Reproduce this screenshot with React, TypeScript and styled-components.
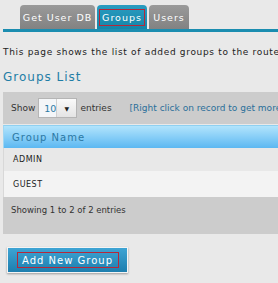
import styled, { createGlobalStyle } from 'styled-components'

const Global = createGlobalStyle`
  html, body {
    margin: 0;
    padding: 0;
    background: #e9e9e9;
    font-family: "DejaVu Sans", Verdana, sans-serif;
  }
`

const Page = styled.div`
  width: 278px;
  height: 283px;
  overflow: hidden;
  padding-left: 3px;
  box-sizing: border-box;
`

const TabBar = styled.div`
  display: flex;
  gap: 2px;
  padding: 5px 0 0 17px;
  height: 24px;
  border-bottom: 3px solid #1b8db0;
  width: 400px;
`

const Tab = styled.div<{ $width: number; $active?: boolean }>`
  width: ${({ $width }) => $width}px;
  height: 24px;
  box-sizing: border-box;
  border-radius: 4px 4px 0 0;
  display: flex;
  align-items: center;
  justify-content: center;
  font-size: 9.5px;
  letter-spacing: 1px;
  color: #fff;
  background: ${({ $active }) =>
    $active ? 'linear-gradient(#2a9cc0, #1585a8)' : 'linear-gradient(#9a9a9a, #828282)'};
`

const TabLabel = styled.span<{ $outlined?: boolean }>`
  padding: 2px 2px;
  border: 1px solid ${({ $outlined }) => ($outlined ? '#b5283a' : 'transparent')};
`

const Intro = styled.p`
  margin: 15px 0 0;
  font-size: 9px;
  letter-spacing: 0.68px;
  color: #222;
  white-space: nowrap;
`

const Title = styled.h2`
  margin: 13px 0 0;
  font-size: 12px;
  font-weight: normal;
  letter-spacing: 1px;
  color: #1f7ea6;
`

const Toolbar = styled.div`
  margin-top: 8px;
  height: 32px;
  background: #cccccc;
  display: flex;
  align-items: center;
  padding-left: 8px;
  font-size: 9px;
  color: #333;
  white-space: nowrap;
  gap: 3px;
`

const Select = styled.div`
  display: flex;
  width: 48px;
  height: 20px;
  border: 1px solid #b5b5b5;
  box-sizing: border-box;
  background: #f4f6f8;
`

const SelectValue = styled.span`
  flex: 1;
  display: flex;
  align-items: center;
  padding-left: 5px;
  color: #2a7aa5;
  font-size: 9.5px;
`

const SelectArrow = styled.span`
  width: 19px;
  display: flex;
  align-items: center;
  justify-content: center;
  background: linear-gradient(#fafafa, #e4e4e4);
  border-left: 1px solid #d0d0d0;
  font-size: 6px;
  color: #222;
`

const Hint = styled.span`
  margin-left: 15px;
  color: #2a6f9a;
`

const Table = styled.div`
  margin-top: 1px;
`

const HeaderRow = styled.div`
  height: 23px;
  display: flex;
  align-items: center;
  padding-left: 8px;
  background: linear-gradient(#b2e4fc, #5cb8f2);
  border-top: 1px solid #8fd0f0;
  border-left: 1px solid #9fd6f2;
  box-sizing: border-box;
  font-size: 10px;
  letter-spacing: 1px;
  color: #2b78a3;
`

const Row = styled.div<{ $alt?: boolean }>`
  height: ${({ $alt }) => ($alt ? '26px' : '23px')};
  display: flex;
  align-items: center;
  padding-left: 9px;
  font-size: 8px;
  letter-spacing: 0.5px;
  color: #222;
  background: ${({ $alt }) => ($alt ? '#f3f3f3' : '#e8e8e8')};
  border-left: 1px solid #d8d8d8;
`

const Footer = styled.div`
  height: 37px;
  background: #cccccc;
  padding: 8px 0 0 8px;
  box-sizing: border-box;
  font-size: 8.5px;
  color: #333;
`

const Button = styled.button`
  margin: 13px 0 0 4px;
  width: 121px;
  height: 26px;
  padding: 0;
  display: flex;
  align-items: center;
  justify-content: center;
  border: 1px solid #f4f4f4;
  background: linear-gradient(#3ea4d4, #1d7eae);
  box-shadow: 0 1px 2px rgba(0, 0, 0, 0.35);
  font-family: "DejaVu Sans", Verdana, sans-serif;
  font-size: 10px;
  letter-spacing: 1px;
  color: #fff;
`

const ButtonLabel = styled.span`
  width: 102px;
  height: 16px;
  box-sizing: border-box;
  border: 1px solid #b5283a;
  display: flex;
  align-items: center;
  justify-content: center;
`

export default function App() {
  return (
    <Page>
      <Global />
      <TabBar>
        <Tab $width={75}>Get User DB</Tab>
        <Tab $width={50} $active>
          <TabLabel $outlined>Groups</TabLabel>
        </Tab>
        <Tab $width={40}>Users</Tab>
      </TabBar>
      <Intro>This page shows the list of added groups to the router.</Intro>
      <Title>Groups List</Title>
      <Toolbar>
        Show
        <Select>
          <SelectValue>10</SelectValue>
          <SelectArrow>▼</SelectArrow>
        </Select>
        entries
        <Hint>[Right click on record to get more options]</Hint>
      </Toolbar>
      <Table>
        <HeaderRow>Group Name</HeaderRow>
        <Row>ADMIN</Row>
        <Row $alt>GUEST</Row>
      </Table>
      <Footer>Showing 1 to 2 of 2 entries</Footer>
      <Button>
        <ButtonLabel>Add New Group</ButtonLabel>
      </Button>
    </Page>
  )
}
